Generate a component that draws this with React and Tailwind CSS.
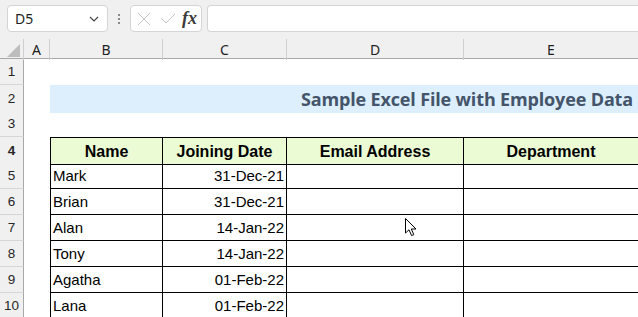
import React from 'react';

const cols = 'grid grid-cols-[24px_26px_113px_124px_177px_1fr]';

const rows = [
  { n: 5, name: 'Mark', date: '31-Dec-21' },
  { n: 6, name: 'Brian', date: '31-Dec-21' },
  { n: 7, name: 'Alan', date: '14-Jan-22' },
  { n: 8, name: 'Tony', date: '14-Jan-22' },
  { n: 9, name: 'Agatha', date: '01-Feb-22' },
  { n: 10, name: 'Lana', date: '01-Feb-22' },
];

const RowHead = ({ n }) => (
  <div className="flex items-center justify-center bg-[#f0f0f0] border-r border-r-[#a8a8a8] border-b border-b-[#d6d6d6] text-[13.5px] text-[#262626] pt-[2px]">
    {n}
  </div>
);

const Cursor = () => (
  <svg className="absolute left-[404px] top-[217px]" width="14" height="21" viewBox="0 0 14 21">
    <path
      d="M1.5 1.5 L1.5 16 L5 12.8 L7.6 18.6 L9.8 17.6 L7.3 12 L12 12 Z"
      fill="#fff"
      stroke="#000"
      strokeWidth="1"
      strokeLinejoin="miter"
    />
  </svg>
);

export default function App() {
  return (
    <div className="relative w-[638px] h-[317px] overflow-hidden bg-white font-['Liberation_Sans',sans-serif]">
      {/* formula bar */}
      <div className="h-[38px] bg-[#f0f0f0] flex items-start pt-[5px] pl-[7px] gap-0">
        <div className="w-[101px] h-[27px] bg-white border border-[#d4d4d4] rounded-[4px] flex items-center justify-between pl-[7px] pr-[8px]">
          <span className="text-[14px] text-[#1f1f1f] font-['Noto_Sans',sans-serif]">D5</span>
          <svg width="10" height="6" viewBox="0 0 10 6">
            <path d="M1 1 L5 5 L9 1" fill="none" stroke="#444" strokeWidth="1.2" />
          </svg>
        </div>
        <div className="w-[22px] h-[27px] flex flex-col items-center justify-center gap-[2px]">
          <div className="w-[2px] h-[2px] bg-[#8a8a8a]" />
          <div className="w-[2px] h-[2px] bg-[#8a8a8a]" />
          <div className="w-[2px] h-[2px] bg-[#8a8a8a]" />
        </div>
        <div className="w-[72px] h-[27px] bg-white border border-[#d4d4d4] rounded-[4px] flex items-center pl-[6px] pr-[4px]">
          <svg width="14" height="14" viewBox="0 0 14 14">
            <path d="M1 1 L13 13 M13 1 L1 13" stroke="#c4c4c4" strokeWidth="1" />
          </svg>
          <svg className="ml-[9px]" width="16" height="12" viewBox="0 0 16 12">
            <path d="M1 5 L6 10 L15 1" fill="none" stroke="#c4c4c4" strokeWidth="1" />
          </svg>
          <span className="ml-auto italic font-bold text-[18px] leading-none text-[#3a3a3a] font-['Liberation_Serif',serif] pb-[2px]">fx</span>
        </div>
        <div className="ml-[5px] flex-1 h-[27px] bg-white border border-[#d4d4d4] rounded-l-[4px] border-r-0" />
      </div>

      {/* column headers */}
      <div className="h-[1px] bg-[#f0f0f0]" />
      <div className={`${cols} h-[20px] bg-[#f0f0f0] border-b border-b-[#a8a8a8] text-[14px] text-[#1f1f1f] font-['Noto_Sans',sans-serif]`}>
        <div className="relative border-r border-r-[#cfcfcf]">
          <div className="absolute right-[3px] bottom-[3px] w-0 h-0 border-l-[13px] border-l-transparent border-b-[13px] border-b-[#bdbdbd]" />
        </div>
        <div className="flex items-center justify-center border-r border-r-[#cfcfcf]">A</div>
        <div className="flex items-center justify-center border-r border-r-[#cfcfcf]">B</div>
        <div className="flex items-center justify-center border-r border-r-[#cfcfcf]">C</div>
        <div className="flex items-center justify-center border-r border-r-[#cfcfcf]">D</div>
        <div className="flex items-center justify-center">E</div>
      </div>

      {/* row 1 */}
      <div className={`${cols} h-[26px]`}>
        <RowHead n={1} />
        <div className="col-span-5" />
      </div>

      {/* row 2 title */}
      <div className={`${cols} h-[26px]`}>
        <RowHead n={2} />
        <div />
        <div className="col-span-4 bg-[#ddeffc] flex items-center justify-end pr-[5px] pt-[1px] font-['Open_Sans',sans-serif] font-bold text-[18px] tracking-[-0.15px] text-[#44546a]">
          Sample Excel File with Employee Data
        </div>
      </div>

      {/* row 3 */}
      <div className={`${cols} h-[26px]`}>
        <RowHead n={3} />
        <div className="col-span-5" />
      </div>

      {/* row 4 header */}
      <div className={`${cols} h-[26px] text-[16px] font-bold text-black`}>
        <RowHead n={4} />
        <div />
        <div className="bg-[#ebfbd4] border border-black flex items-center justify-center pt-[2px]">Name</div>
        <div className="bg-[#ebfbd4] border-y border-r border-black flex items-center justify-center pt-[2px]">Joining Date</div>
        <div className="bg-[#ebfbd4] border-y border-r border-black flex items-center justify-center pt-[2px]">Email Address</div>
        <div className="bg-[#ebfbd4] border-y border-black flex items-center justify-center pt-[2px]">Department</div>
      </div>

      {rows.map((r) => (
        <div key={r.n} className={`${cols} h-[26px] text-[15px] text-black`}>
          <RowHead n={r.n} />
          <div />
          <div className="border-x border-b border-black flex items-center pl-[2px] pt-[2px]">{r.name}</div>
          <div className="border-r border-b border-black flex items-center justify-end pr-[2px] pt-[2px]">{r.date}</div>
          <div className="border-r border-b border-black" />
          <div className="border-b border-black" />
        </div>
      ))}

      <Cursor />
    </div>
  );
}
